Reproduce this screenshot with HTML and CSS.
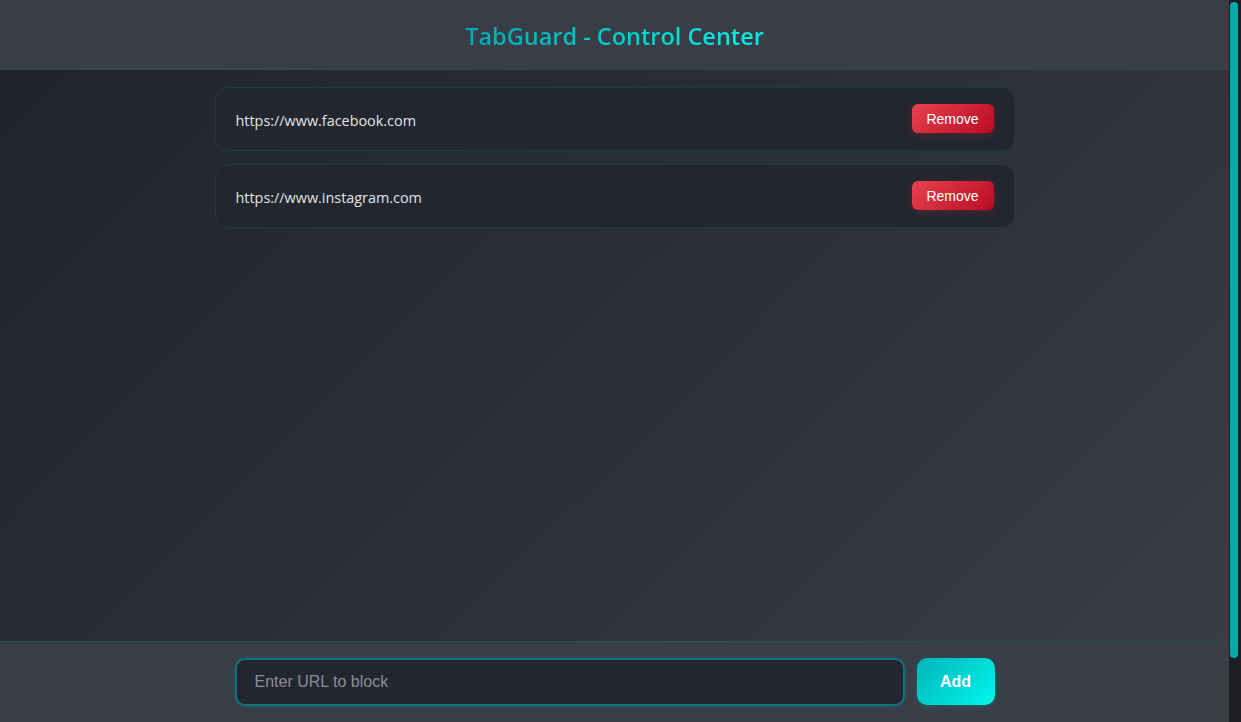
FILE: index.html
```html
<!DOCTYPE html>
<html lang="en">
<head>
<meta charset="utf-8">
<title>TabGuard - Control Center</title>
<link rel="stylesheet" href="styles.css">
</head>
<body>
<header class="topbar">
  <h1 class="title">TabGuard - Control Center</h1>
</header>
<main class="list">
  <div class="site-card">
    <span class="site-url">https://www.facebook.com</span>
    <button class="remove-btn">Remove</button>
  </div>
  <div class="site-card">
    <span class="site-url">https://www.instagram.com</span>
    <button class="remove-btn">Remove</button>
  </div>
</main>
<footer class="composer">
  <input class="url-input" type="text" placeholder="Enter URL to block">
  <button class="add-btn">Add</button>
</footer>
<div class="scrollbar"><div class="scroll-thumb"></div></div>
</body>
</html>
```
FILE: styles.css
```css
* { box-sizing: border-box; }

html {
  background: #23272f;
}

body {
  margin: 0 12px 0 0;
  font-family: "Open Sans", "Noto Sans", sans-serif;
  color: #e0e0e0;
  background: linear-gradient(135deg, #1f232b 0%, #2b2f37 50%, #3a3e47 100%);
  height: 722px;
  overflow: hidden;
}

.topbar {
  height: 70px;
  background: #393d46;
  border-bottom: 1px solid #2e4b52;
  display: flex;
  align-items: center;
  justify-content: center;
}

.title {
  margin: 0;
  font-size: 23.5px;
  font-weight: 600;
  background: linear-gradient(90deg, #00a9b3 0%, #00f0e9 100%);
  -webkit-background-clip: text;
  background-clip: text;
  color: transparent;
  padding-top: 3px;
}

.list {
  width: 800px;
  margin: 0 auto;
  padding-top: 17px;
  display: flex;
  flex-direction: column;
  gap: 13px;
}

.site-card {
  height: 64px;
  background: #22272f;
  border: 1px solid #1f3a41;
  border-radius: 12px;
  padding: 0 20px;
  display: flex;
  align-items: center;
  justify-content: space-between;
}

.site-url {
  font-size: 14.4px;
  color: #e2e2e2;
  padding-top: 2px;
}

.remove-btn {
  width: 82px;
  height: 29px;
  border: none;
  border-radius: 6px;
  background: linear-gradient(135deg, #e8414c 0%, #b80c26 100%);
  color: #fff;
  font-family: "Liberation Sans", Arial, sans-serif;
  font-size: 14px;
  box-shadow: 0 2px 6px rgba(200, 30, 50, 0.3);
  margin-top: -1px;
}

.composer {
  position: fixed;
  left: 0;
  right: 12px;
  bottom: 0;
  height: 81px;
  background: #393d46;
  border-top: 1px solid #2e4b52;
  display: flex;
  align-items: center;
  justify-content: center;
  gap: 12px;
}

.url-input {
  width: 670px;
  height: 48px;
  background: #22272f;
  border: 2px solid #0b7379;
  border-radius: 10px;
  padding: 0 18px;
  color: #e0e0e0;
  font-family: "Liberation Sans", Arial, sans-serif;
  font-size: 16px;
  outline: none;
  box-shadow: 0 0 4px rgba(0, 180, 190, 0.25);
  margin-top: -1px;
}

.url-input::placeholder {
  color: #8a8d93;
}

.add-btn {
  width: 78px;
  height: 47px;
  border: none;
  border-radius: 10px;
  background: linear-gradient(135deg, #00b3bb 0%, #00f7ec 100%);
  color: #fff;
  font-family: "Liberation Sans", Arial, sans-serif;
  font-size: 16px;
  font-weight: 700;
  box-shadow: 0 2px 6px rgba(0, 200, 210, 0.2);
  margin-top: -1px;
}

.scrollbar {
  position: fixed;
  top: 0;
  right: 0;
  width: 12px;
  height: 722px;
  background: #1e1f22;
  padding: 2px 3px 0 1px;
}

.scroll-thumb {
  height: 656px;
  background: #0aa7ad;
  border-radius: 4px;
}
```
